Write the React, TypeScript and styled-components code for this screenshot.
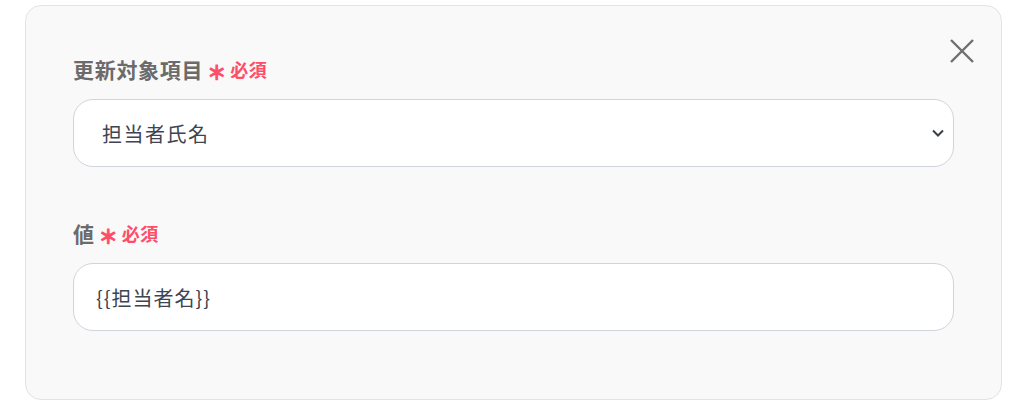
import React from "react";
import styled, { createGlobalStyle } from "styled-components";

const Global = createGlobalStyle`
  html, body { margin: 0; padding: 0; background: #ffffff; }
  body { font-family: "Noto Sans CJK JP", "Noto Sans", sans-serif; }
  * { box-sizing: border-box; }
`;

const Page = styled.div`
  padding: 5px 15px 6px 25px;
`;

const Card = styled.div`
  position: relative;
  background: #f9f9f9;
  border: 1px solid #e3e3e3;
  border-radius: 16px;
  padding: 47px 47px 68px 47px;
  display: flex;
  flex-direction: column;
`;

const CloseButton = styled.button`
  position: absolute;
  top: 31px;
  right: 25px;
  width: 28px;
  height: 28px;
  padding: 0;
  border: none;
  background: transparent;
  display: flex;
  align-items: center;
  justify-content: center;
  cursor: pointer;
`;

const Field = styled.div<{ $gap: number }>`
  display: flex;
  flex-direction: column;
  margin-top: ${(p) => p.$gap}px;
`;

const Label = styled.div`
  display: flex;
  align-items: center;
  height: 32px;
  margin-bottom: 14px;
`;

const LabelText = styled.span`
  font-size: 21px;
  font-weight: 700;
  letter-spacing: 0.7px;
  color: #6b6b6b;
  line-height: 32px;
`;

const Asterisk = styled.span`
  color: #ff4d68;
  font-size: 19px;
  font-weight: 700;
  margin-left: 4px;
  line-height: 32px;
  position: relative;
  top: 3px;
  -webkit-text-stroke: 1px #ff4d68;
`;

const Required = styled.span`
  color: #ff4d68;
  font-size: 18px;
  font-weight: 700;
  letter-spacing: 0.5px;
  margin-left: 4px;
  line-height: 32px;
`;

const SelectWrap = styled.div`
  position: relative;
  height: 68px;
`;

const Select = styled.select`
  appearance: none;
  -webkit-appearance: none;
  width: 100%;
  height: 68px;
  border: 1px solid #d0d4dc;
  border-radius: 20px;
  background: #ffffff;
  padding: 0 40px 0 28px;
  font-family: "Noto Sans CJK JP", "Noto Sans", sans-serif;
  font-size: 20px;
  letter-spacing: 1.5px;
  color: #3e4451;
  outline: none;
`;

const Chevron = styled.svg`
  position: absolute;
  right: 9px;
  top: 50%;
  transform: translateY(-50%);
  pointer-events: none;
`;

const Input = styled.input`
  width: 100%;
  height: 68px;
  border: 1px solid #d0d4dc;
  border-radius: 20px;
  background: #ffffff;
  padding: 0 22px;
  font-family: "Noto Sans CJK JP", "Noto Sans", sans-serif;
  font-size: 20px;
  letter-spacing: 1px;
  color: #3e4451;
  outline: none;
`;

export default function App() {
  return (
    <>
      <Global />
      <Page>
        <Card>
          <CloseButton aria-label="閉じる">
            <svg width="26" height="26" viewBox="0 0 26 26">
              <path d="M2 2 L24 24 M24 2 L2 24" stroke="#6f6f6f" strokeWidth="2.4" strokeLinecap="butt" />
            </svg>
          </CloseButton>
          <Field $gap={0}>
            <Label>
              <LabelText>更新対象項目</LabelText>
              <Asterisk>＊</Asterisk>
              <Required>必須</Required>
            </Label>
            <SelectWrap>
              <Select defaultValue="担当者氏名">
                <option>担当者氏名</option>
              </Select>
              <Chevron width="14" height="10" viewBox="0 0 14 10">
                <path d="M2 2.5 L7 7.5 L12 2.5" fill="none" stroke="#3a3f47" strokeWidth="2" />
              </Chevron>
            </SelectWrap>
          </Field>
          <Field $gap={50}>
            <Label>
              <LabelText>値</LabelText>
              <Asterisk>＊</Asterisk>
              <Required>必須</Required>
            </Label>
            <Input defaultValue="{{担当者名}}" />
          </Field>
        </Card>
      </Page>
    </>
  );
}
